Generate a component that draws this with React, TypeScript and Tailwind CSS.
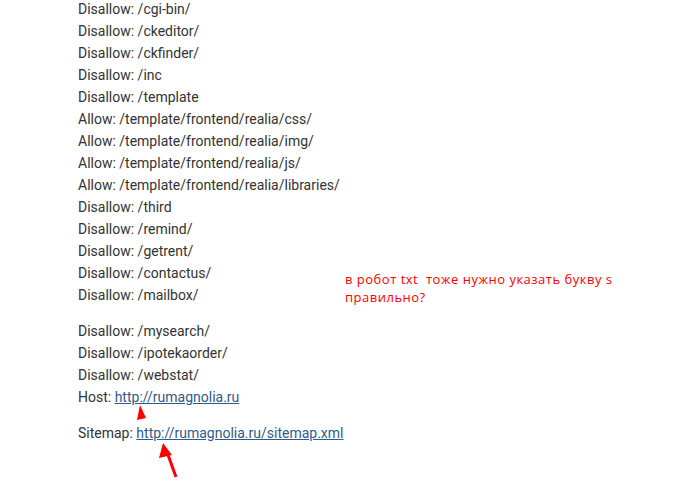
const rulesA = [
  "Disallow: /cgi-bin/",
  "Disallow: /ckeditor/",
  "Disallow: /ckfinder/",
  "Disallow: /inc",
  "Disallow: /template",
  "Allow: /template/frontend/realia/css/",
  "Allow: /template/frontend/realia/img/",
  "Allow: /template/frontend/realia/js/",
  "Allow: /template/frontend/realia/libraries/",
  "Disallow: /third",
  "Disallow: /remind/",
  "Disallow: /getrent/",
  "Disallow: /contactus/",
  "Disallow: /mailbox/",
];

const rulesB = ["Disallow: /mysearch/", "Disallow: /ipotekaorder/", "Disallow: /webstat/"];

export default function App() {
  return (
    <div className="relative w-[699px] h-[487px] overflow-hidden bg-white">
      <div
        className="pl-[78px] -mt-[2px] text-[14px] leading-[22px] text-[#333]"
        style={{ fontFamily: "Roboto, Arial, sans-serif" }}
      >
        {rulesA.map((r) => (
          <div key={r}>{r}</div>
        ))}
        <div className="h-[14px]" />
        {rulesB.map((r) => (
          <div key={r}>{r}</div>
        ))}
        <div>
          Host:{" "}
          <a href="#" className="underline text-[#2f5a8a]">
            http://rumagnolia.ru
          </a>
        </div>
        <div className="h-[14px]" />
        <div>
          Sitemap:{" "}
          <a href="#" className="underline text-[#2f5a8a]">
            http://rumagnolia.ru/sitemap.xml
          </a>
        </div>
      </div>

      {/* annotation */}
      <div
        className="absolute left-[345px] top-[270px] text-[13px] leading-[18px] tracking-[0.5px] text-[#ff0000] whitespace-pre"
        style={{ fontFamily: "'Open Sans', sans-serif" }}
      >
        <div>в робот txt  тоже нужно указать букву s</div>
        <div>правильно?</div>
      </div>

      <svg className="absolute left-0 top-0" width="699" height="487">
        <polygon points="140,405 137,420 146,418" fill="#ff0000" />
        <line x1="176" y1="477" x2="167" y2="452" stroke="#ff0000" strokeWidth="3" />
        <polygon points="163,443 159,458 172,455" fill="#ff0000" />
      </svg>
    </div>
  );
}
